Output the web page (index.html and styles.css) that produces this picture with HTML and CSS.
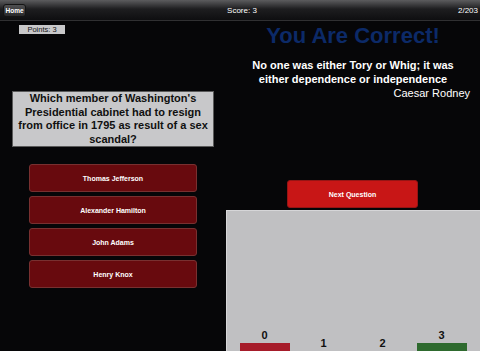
FILE: index.html
```html
<!DOCTYPE html>
<html lang="en">

<head>
    <meta charset="UTF-8">
    <meta name="viewport" content="width=device-width, initial-scale=1.0">
    <title>History Quiz</title>
    <link rel="stylesheet" href="styles.css">
</head>

<body>
    <nav class="topbar">
        <button class="home">Home</button>
        <span class="score">Score: 3</span>
        <span class="count">2/203</span>
    </nav>
    <main class="quiz">
        <section class="left">
            <div class="points">Points: 3</div>
            <div class="question">Which member of Washington's Presidential cabinet had to resign from office in 1795 as result of a sex scandal?</div>
            <div class="answers">
                <button class="answer">Thomas Jefferson</button>
                <button class="answer">Alexander Hamilton</button>
                <button class="answer">John Adams</button>
                <button class="answer">Henry Knox</button>
            </div>
        </section>
        <section class="right">
            <h1 class="result">You Are Correct!</h1>
            <p class="quote">No one was either Tory or Whig; it was either dependence or independence</p>
            <p class="author">Caesar Rodney</p>
            <button class="next">Next Question</button>
            <div class="chart">
                <div class="col">
                    <span class="num">0</span>
                    <div class="bar red"></div>
                </div>
                <div class="col">
                    <span class="num">1</span>
                    <div class="bar"></div>
                </div>
                <div class="col">
                    <span class="num">2</span>
                    <div class="bar"></div>
                </div>
                <div class="col">
                    <span class="num">3</span>
                    <div class="bar green"></div>
                </div>
            </div>
        </section>
    </main>
</body>

</html>
```

FILE: styles.css
```css
* {
    margin: 0;
    padding: 0;
    box-sizing: border-box;
}

body {
    background-color: rgb(6, 6, 8);
    width: 480px;
    height: 351px;
    overflow: hidden;
    font-family: "Liberation Sans", Arial, sans-serif;
}

.topbar {
    height: 21px;
    display: flex;
    align-items: center;
    justify-content: space-between;
    padding: 0 2px 0 3px;
    background: linear-gradient(rgb(92, 92, 94), rgb(30, 30, 32) 45%, rgb(14, 14, 16));
    border-bottom: 1px solid rgb(48, 48, 50);
    color: white;
    font-size: 8px;
}

.home {
    width: 23px;
    height: 13px;
    border: 1px solid rgb(20, 20, 20);
    border-radius: 3px;
    background: linear-gradient(rgb(80, 80, 82), rgb(40, 40, 42));
    color: white;
    font-family: inherit;
    font-size: 6.5px;
    font-weight: 700;
}

.quiz {
    display: grid;
    grid-template-columns: 226px 254px;
}

.left {
    display: flex;
    flex-direction: column;
}

.points {
    width: 46px;
    height: 9px;
    margin: 4px 0 0 19px;
    background-color: rgb(200, 200, 202);
    color: rgb(20, 20, 20);
    font-size: 7.5px;
    line-height: 9px;
    text-align: center;
}

.question {
    width: 202px;
    margin: 57px 0 0 12px;
    padding: 0 2px;
    background-color: rgb(200, 200, 202);
    border: 1px solid rgb(90, 90, 90);
    color: rgb(16, 16, 16);
    font-size: 11px;
    font-weight: 700;
    line-height: 13.5px;
    text-align: center;
}

.answers {
    display: flex;
    flex-direction: column;
    gap: 4px;
    margin: 17px 0 0 29px;
    width: 168px;
}

.answer {
    height: 28px;
    border: 1px solid rgb(120, 48, 48);
    border-radius: 3px;
    background-color: rgb(104, 10, 14);
    color: white;
    font-family: inherit;
    font-size: 7px;
    font-weight: 700;
}

.right {
    display: flex;
    flex-direction: column;
}

.result {
    margin-top: 3px;
    color: rgb(12, 42, 104);
    font-size: 22px;
    line-height: 24px;
    text-align: center;
}

.quote {
    margin-top: 10px;
    padding: 0 22px;
    color: white;
    font-size: 11px;
    font-weight: 700;
    line-height: 14px;
    text-align: center;
}

.author {
    padding-right: 10px;
    color: white;
    font-size: 11px;
    line-height: 14px;
    text-align: right;
}

.next {
    width: 131px;
    height: 28px;
    margin: 80px 0 0 61px;
    border: 1px solid rgb(150, 20, 20);
    border-radius: 3px;
    background-color: rgb(200, 22, 22);
    color: white;
    font-family: inherit;
    font-size: 7px;
    font-weight: 700;
}

.chart {
    height: 141px;
    margin-top: 2px;
    padding-left: 8px;
    display: flex;
    align-items: flex-end;
    background-color: rgb(192, 192, 194);
    border-top: 1px solid rgb(214, 214, 216);
    border-left: 1px solid rgb(214, 214, 216);
}

.col {
    width: 59px;
    display: flex;
    flex-direction: column;
    align-items: center;
    gap: 2px;
}

.num {
    color: rgb(16, 16, 16);
    font-size: 11px;
    font-weight: 700;
    line-height: 12px;
}

.bar {
    width: 50px;
    height: 0;
}

.red {
    height: 8px;
    background-color: rgb(166, 28, 42);
}

.green {
    height: 8px;
    background-color: rgb(46, 106, 46);
}
```
